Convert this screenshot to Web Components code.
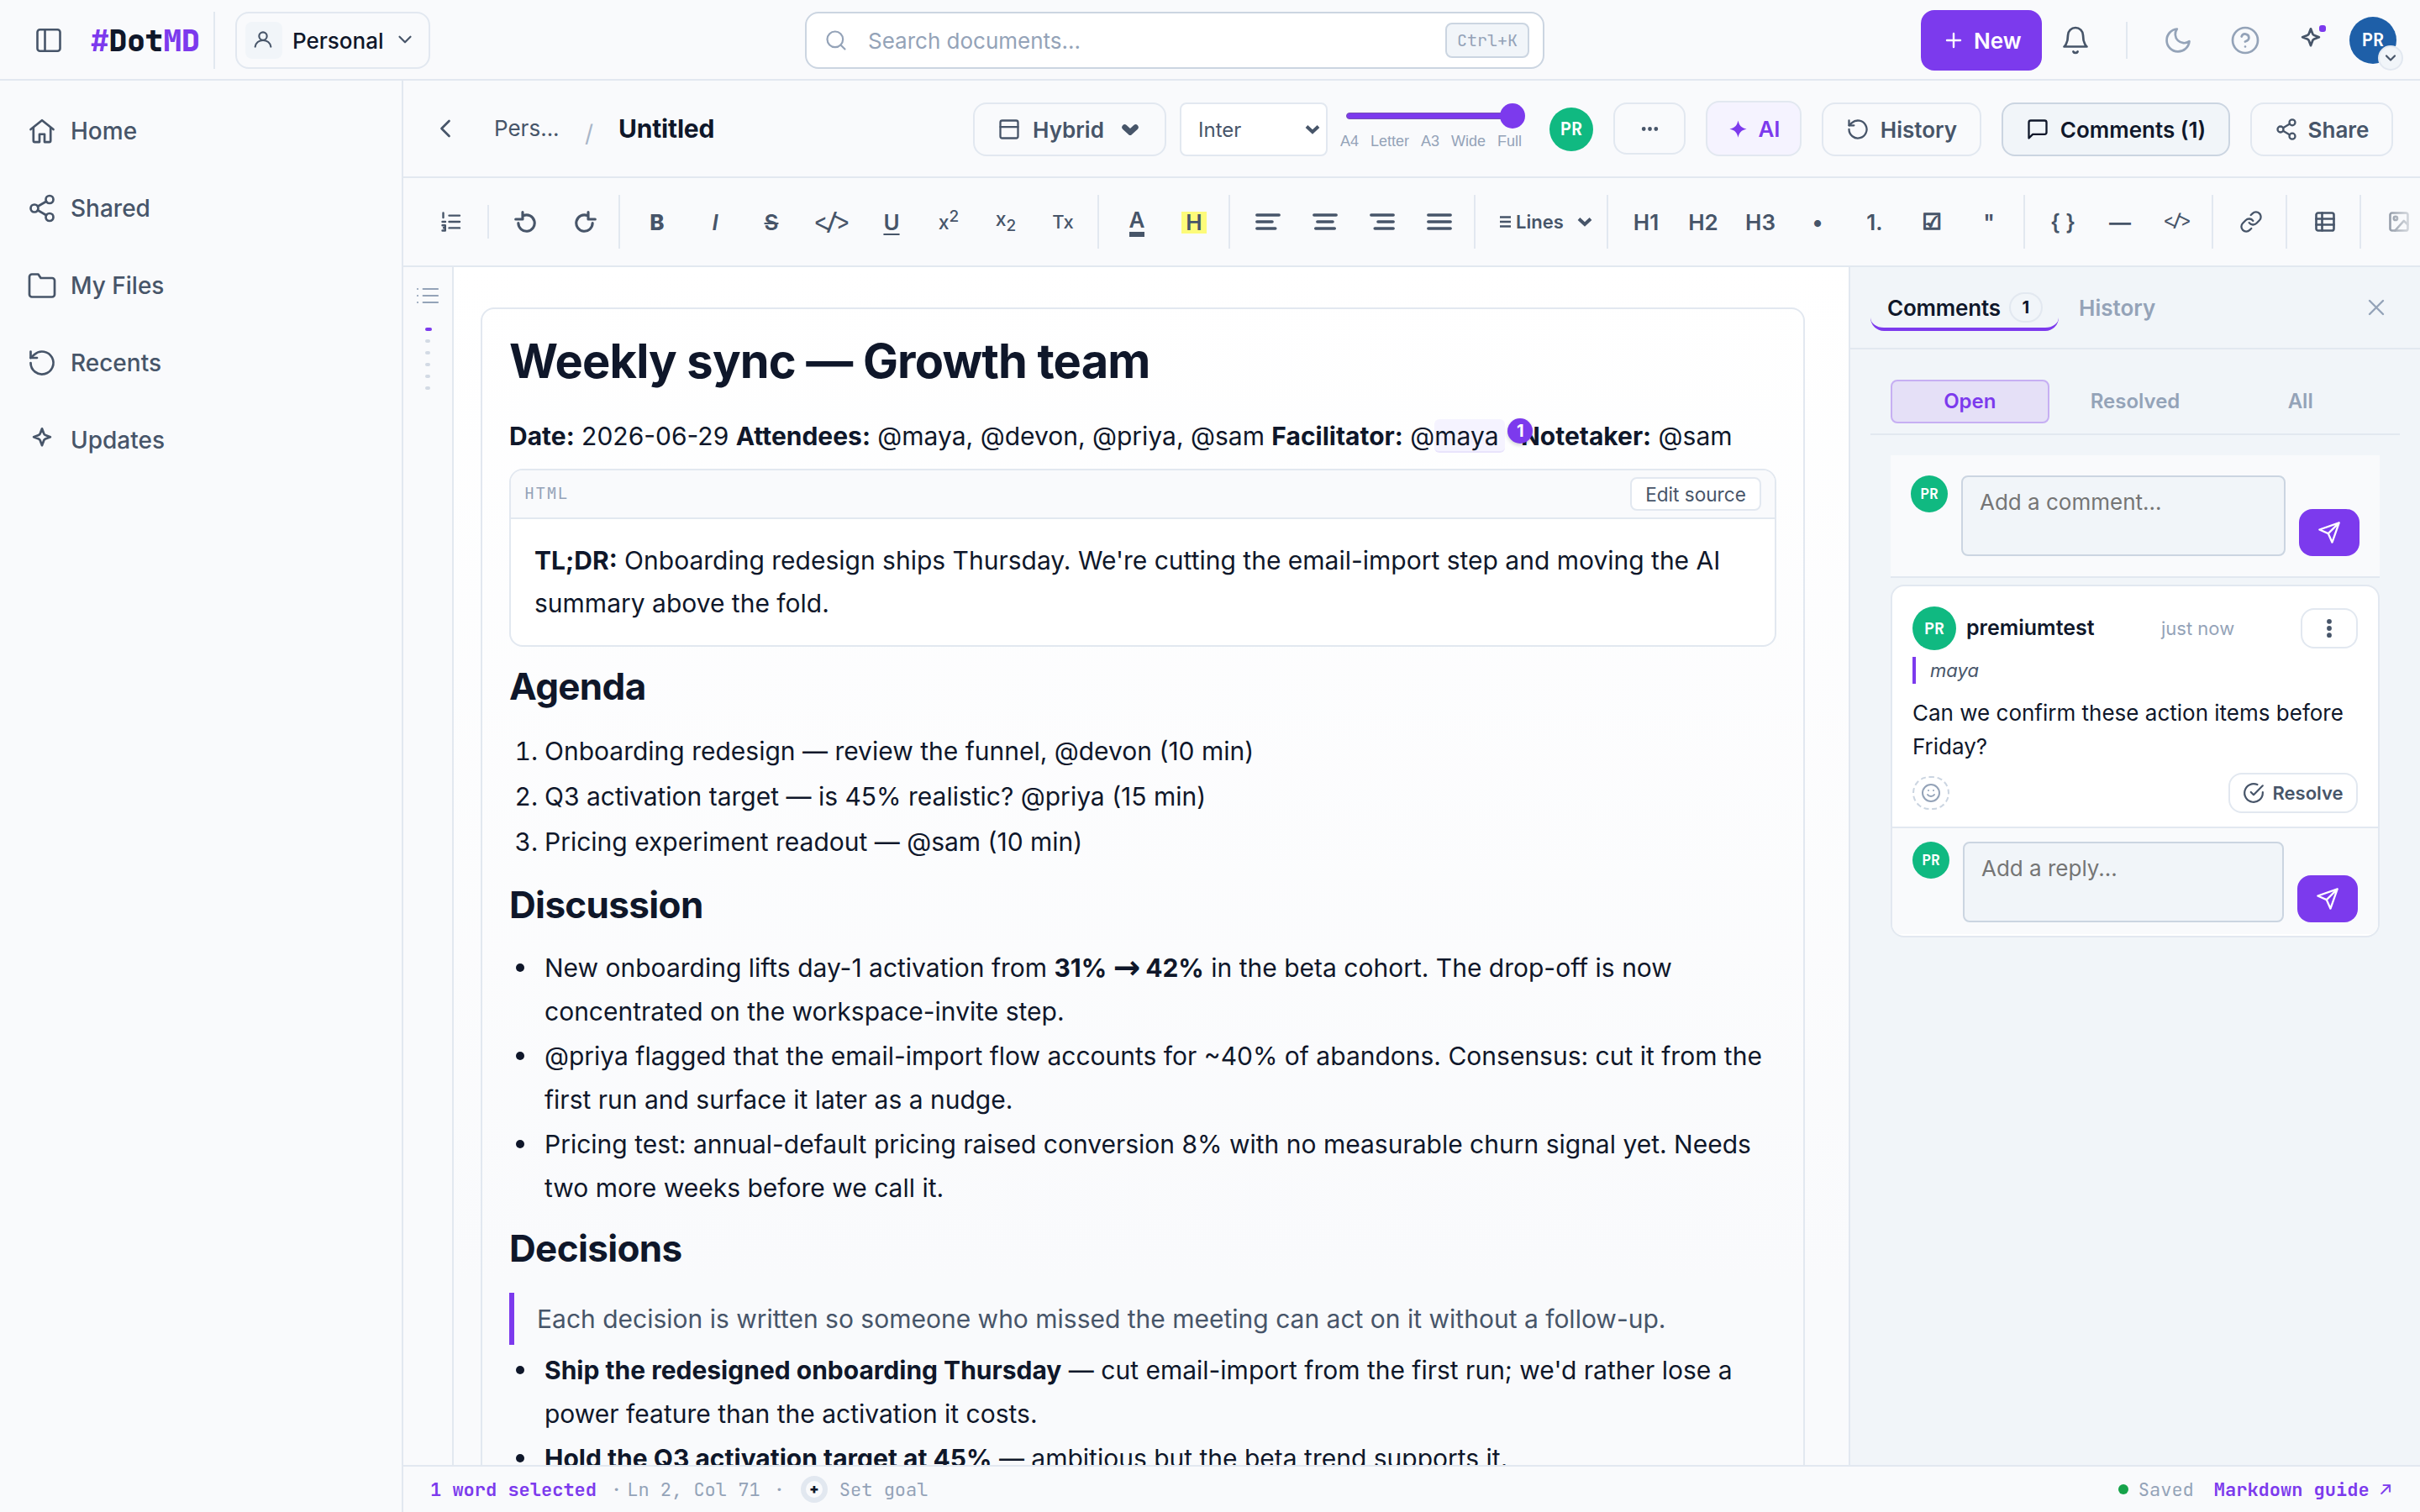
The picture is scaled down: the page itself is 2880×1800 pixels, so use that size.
<!DOCTYPE html>
<html lang="en">
<head>
<meta charset="UTF-8">
<title>Untitled - DotMD</title>
<style>
  :root {
    --bg: #f9fafc;
    --panel: #f1f5f9;
    --line: #e2e8f0;
    --line-strong: #cbd5e1;
    --text: #0f172a;
    --text-soft: #475569;
    --muted: #94a3b8;
    --accent: #7c3aed;
    --accent-soft: #f5f3ff;
    --green: #10b981;
    --mono: "JetBrains Mono", "DejaVu Sans Mono", monospace;
  }
  body {
    margin: 0;
    width: 2880px;
    height: 1800px;
    overflow: hidden;
    background: var(--bg);
    color: var(--text);
    font-family: Inter, "Liberation Sans", sans-serif;
    font-size: 26px;
  }

  /* Prose rules that need sibling or nested selectors, which ::slotted can't do */
  dm-html-block + h2 { margin-top: 19px; }
  ul + h2 { margin-top: 18px; }
  h2 + ol { margin-top: 23.500px; }
  h2 + ul { margin-top: 22.500px; }
  ul { list-style: none; line-height: 51.500px; }
  ul li::before {
    content: "";
    display: inline-block;
    width: 10px;
    height: 10px;
    margin: 0 24px 0 -34px;
    border-radius: 50%;
    background: currentColor;
    vertical-align: 6px;
  }
  li + li { margin-top: 2px; }
  ol li + li { margin-top: 3px; }
  .arrow { font-family: "DejaVu Sans", sans-serif; font-size: 39px; line-height: 0; letter-spacing: -1px; vertical-align: -2px; }
</style>
</head>
<body>
<dm-app>
  <dm-document>
    <h1>Weekly sync — Growth team</h1>
    <p><strong>Date:</strong> 2026-06-29 <strong>Attendees:</strong> @maya, @devon, @priya, @sam <strong>Facilitator:</strong> @<dm-mark count="1">maya</dm-mark> <strong>Notetaker:</strong> @sam</p>
    <dm-html-block><strong>TL;DR:</strong> Onboarding redesign ships Thursday. We're cutting the email-import step and moving the AI summary above the fold.</dm-html-block>
    <h2>Agenda</h2>
    <ol>
      <li>Onboarding redesign — review the funnel, @devon (10 min)</li>
      <li>Q3 activation target — is 45% realistic? @priya (15 min)</li>
      <li>Pricing experiment readout — @sam (10 min)</li>
    </ol>
    <h2>Discussion</h2>
    <ul>
      <li>New onboarding lifts day-1 activation from <strong>31% <span class="arrow">→</span> 42%</strong> in the beta cohort. The drop-off is now concentrated on the workspace-invite step.</li>
      <li>@priya flagged that the email-import flow accounts for ~40% of abandons. Consensus: cut it from the first run and surface it later as a nudge.</li>
      <li>Pricing test: annual-default pricing raised conversion 8% with no measurable churn signal yet. Needs two more weeks before we call it.</li>
    </ul>
    <h2>Decisions</h2>
    <blockquote>Each decision is written so someone who missed the meeting can act on it without a follow-up.</blockquote>
    <ul>
      <li><strong>Ship the redesigned onboarding Thursday</strong> — cut email-import from the first run; we'd rather lose a power feature than the activation it costs.</li>
      <li><strong>Hold the Q3 activation target at 45%</strong> — ambitious but the beta trend supports it.</li>
    </ul>
  </dm-document>
</dm-app>

<script>
  const ICONS = {
    panel: '<rect x="3" y="3.500" width="18" height="17" rx="2"/><path d="M9 3.500v17"/>',
    user: '<circle cx="12" cy="8.600" r="4"/><path d="M4 19.400c.5-4 3.900-6.600 8-6.600s7.500 2.600 8 6.600"/>',
    down: '<path d="M6 9l6 6 6-6"/>',
    left: '<path d="M15 18l-6-6 6-6"/>',
    search: '<circle cx="11" cy="11" r="8"/><path d="M21 21l-4.350-4.350"/>',
    plus: '<path d="M12 4v16M4 12h16"/>',
    bell: '<path d="M18 8A6 6 0 0 0 6 8c0 7-3 9-3 9h18s-3-2-3-9"/><path d="M13.730 21a2 2 0 0 1-3.460 0"/>',
    moon: '<path d="M21 12.790A9 9 0 1 1 11.210 3 7 7 0 0 0 21 12.790z"/>',
    help: '<circle cx="12" cy="12" r="10"/><path d="M9.090 9a3 3 0 0 1 5.830 1c0 2-3 3-3 3M12 17h.01"/>',
    sparkle: '<path d="M12 2.900l1.500 3.900a2 2 0 0 0 1.200 1.200l3.900 1.500-3.900 1.500a2 2 0 0 0-1.200 1.200L12 16.100l-1.500-3.900a2 2 0 0 0-1.200-1.200L5.400 9.500l3.900-1.500a2 2 0 0 0 1.200-1.200z"/>',
    star: '<path fill="currentColor" stroke="none" d="M12 3c1.300 5.400 3.200 7.500 9 9-5.800 1.500-7.700 3.600-9 9-1.300-5.400-3.200-7.500-9-9 5.800-1.500 7.700-3.600 9-9z"/>',
    home: '<path d="M3 10.700l9-7.200 9 7.200"/><path d="M5.200 9.500v10.200a1 1 0 0 0 1 1h3.800v-6.200h4v6.200h3.800a1 1 0 0 0 1-1V9.500"/>',
    share: '<circle cx="18" cy="5" r="3"/><circle cx="6" cy="12" r="3"/><circle cx="18" cy="19" r="3"/><path d="M8.600 13.500l6.800 4M15.400 6.500l-6.800 4"/>',
    folder: '<path d="M22 19a2 2 0 0 1-2 2H4a2 2 0 0 1-2-2V5a2 2 0 0 1 2-2h5l2 3h9a2 2 0 0 1 2 2z"/>',
    recent: '<path d="M3 12a9 9 0 1 0 3-6.700L3 8"/><path d="M3 3v5h5"/>',
    layout: '<rect x="3" y="3" width="18" height="18" rx="2"/><path d="M3 9.500h18"/>',
    dots: '<g fill="currentColor"><circle cx="5" cy="12" r="1.200"/><circle cx="12" cy="12" r="1.200"/><circle cx="19" cy="12" r="1.200"/></g>',
    vdots: '<g fill="currentColor"><circle cx="12" cy="5" r="1.500"/><circle cx="12" cy="12" r="1.500"/><circle cx="12" cy="19" r="1.500"/></g>',
    comment: '<path d="M21 15a2 2 0 0 1-2 2H7l-4 4V5a2 2 0 0 1 2-2h14a2 2 0 0 1 2 2z"/>',
    list: '<path d="M8 6h13M8 12h13M8 18h13M3 6h.01M3 12h.01M3 18h.01"/>',
    ordered: '<path d="M9.500 4.600H22M9.500 12H22M9.500 19.400H22M2.500 1.500v5.500M1.500 12H5M1.500 16.300h3.300v3H3M4.800 19.500v3H1.500"/>',
    undo: '<path d="M5 13.300a8.300 8.300 0 1 0 5.300-7.700"/><path d="M9.400 2.100v7.300H2.300"/>',
    redo: '<path d="M19 13.300a8.300 8.300 0 1 1-5.300-7.700"/><path d="M14.600 2.100v7.300h7.100"/>',
    alignL: '<path d="M1.500 5.600h21M1.500 12h14.500M1.500 18.400h17.500"/>',
    alignC: '<path d="M1.500 5.600h21M4.700 12h14.500M3 18.400h18"/>',
    alignR: '<path d="M1.500 5.600h21M8 12h14.500M5 18.400h17.500"/>',
    alignJ: '<path d="M1.500 5.600h21M1.500 12h21M1.500 18.400h21"/>',
    link: '<path d="M10 13a5 5 0 0 0 7.540.540l3-3a5 5 0 0 0-7.070-7.070l-1.720 1.710"/><path d="M14 11a5 5 0 0 0-7.540-.540l-3 3a5 5 0 0 0 7.070 7.070l1.710-1.710"/>',
    table: '<rect x="3" y="3" width="18" height="18" rx="2"/><path d="M3 9h18M3 15h18M9 3v18"/>',
    image: '<rect x="3" y="3" width="18" height="18" rx="2"/><circle cx="8.500" cy="8.500" r="1.800"/><path d="M21 15l-4-4L8 21"/>',
    close: '<path d="M4 4l16 16M20 4L4 20"/>',
    send: '<path d="M22 2L11 13M22 2l-7 20-4-9-9-4z"/>',
    smile: '<circle cx="12" cy="12" r="10"/><path d="M8 14s1.500 2 4 2 4-2 4-2M9 9h.01M15 9h.01"/>',
    check: '<path d="M22 11.080V12a10 10 0 1 1-5.930-9.140"/><path d="M22 4L12 14.010l-3-3"/>'
  };

  // <dm-icon name size stroke>: stroke is given in screen pixels
  class DmIcon extends HTMLElement {
    constructor() {
      super();
      this.attachShadow({ mode: 'open' });
    }
    connectedCallback() {
      const size = Number(this.getAttribute('size') || 28);
      const stroke = Number(this.getAttribute('stroke') || 2.3) * 24 / size;
      this.shadowRoot.innerHTML = `
        <style>
          :host { display: block; flex: none; width: ${size}px; height: ${size}px; }
          svg { display: block; overflow: visible; }
        </style>
        <svg width="${size}" height="${size}" viewBox="0 0 24 24" fill="none" stroke="currentColor"
          stroke-width="${stroke}" stroke-linecap="round" stroke-linejoin="round">${ICONS[this.getAttribute('name')]}</svg>
      `;
    }
  }
  customElements.define('dm-icon', DmIcon);

  // Small helper: an element whose whole shadow tree is static markup
  function define(tag, html) {
    const template = document.createElement('template');
    template.innerHTML = html;
    customElements.define(tag, class extends HTMLElement {
      constructor() {
        super();
        this.attachShadow({ mode: 'open' }).appendChild(template.content.cloneNode(true));
      }
    });
  }

  define('dm-avatar', `
    <style>
      :host {
        display: flex; align-items: center; justify-content: center; flex: none; box-sizing: border-box;
        width: var(--size, 44px); height: var(--size, 44px); border-radius: 50%;
        background: var(--fill, var(--green)); color: #fff;
        font: 700 var(--fs, 18px)/1 var(--mono);
      }
    </style>
    <slot>PR</slot>
  `);

  define('dm-button', `
    <style>
      :host {
        display: flex; align-items: center; justify-content: center; flex: none; box-sizing: border-box;
        height: 64px; border: 2px solid var(--line); border-radius: 16px;
        color: var(--text-soft); font-weight: 600; font-size: 26px; white-space: nowrap;
      }
    </style>
    <slot></slot>
  `);

  define('dm-topbar', `
    <style>
      :host {
        display: flex; align-items: center; box-sizing: border-box; height: 96px; padding: 2px 20px 0 40px;
        border-bottom: 2px solid var(--line); background: var(--bg); color: var(--text-soft);
      }
      .logo { margin-left: 32px; width: 128px; font: 800 36px/1 var(--mono); color: var(--text); white-space: nowrap; }
      .logo b { color: var(--accent); font-weight: 800; }
      .rule { width: 2px; height: 68px; background: var(--line); margin: 0 24px 0 18px; flex: none; }
      .space {
        display: flex; align-items: center; box-sizing: border-box; width: 232px; height: 68px; padding-left: 10px;
        border: 2px solid var(--line); border-radius: 16px; font-weight: 500; color: var(--text);
      }
      .space .ico { width: 44px; height: 44px; border-radius: 8px; background: var(--panel); display: flex; align-items: center; justify-content: center; margin-right: 12px; color: var(--text-soft); }
      .space .ico dm-icon { margin-top: -2px; margin-left: -2px; }
      .space > dm-icon { margin: -2px 0 0 12px; color: var(--text-soft); }
      .search {
        display: flex; align-items: center; box-sizing: border-box; width: 880px; height: 68px; margin-left: 446px; padding: 0 16px 0 21px;
        background: #fff; border: 2px solid var(--line-strong); border-radius: 16px; color: var(--muted);
      }
      .search span { margin-left: 24px; flex: 1; }
      kbd {
        box-sizing: border-box; width: 100px; height: 42px; line-height: 38px; text-align: center;
        background: var(--panel); border: 2px solid var(--line-strong); border-radius: 8px; font-family: var(--mono); font-size: 20px;
      }
      .new {
        display: flex; align-items: center; width: 144px; height: 72px; box-sizing: border-box; padding-left: 27px; gap: 12px; margin-left: auto;
        border-radius: 16px; background: var(--accent); color: #fff; font-weight: 600;
      }
      .bell { margin: 0 42px 0 22px; }
      .rule.small { height: 44px; margin: 0 42px 0 0; }
      .muted { color: var(--muted); }
      .help { margin: 0 42px 0 44px; }
      .spark { position: relative; margin-right: 28px; }
      .spark i { position: absolute; left: 28px; top: 0; width: 8px; height: 8px; border-radius: 3px; background: var(--accent); }
      .me { position: relative; margin-right: 8px; }
      .me div {
        position: absolute; left: 34px; top: 34px; box-sizing: border-box; width: 30px; height: 30px; border-radius: 50%;
        border: 2px solid var(--line); background: var(--panel); display: flex; align-items: center; justify-content: center;
      }
    </style>
    <dm-icon name="panel" size="36" stroke="2.600"></dm-icon>
    <div class="logo"><b>#</b>Dot<b>MD</b></div>
    <div class="rule"></div>
    <div class="space">
      <div class="ico"><dm-icon name="user" size="28" stroke="2.100"></dm-icon></div>
      Personal
      <dm-icon name="down" size="26" stroke="2.200"></dm-icon>
    </div>
    <div class="search"><dm-icon name="search" size="28" stroke="2.200"></dm-icon><span>Search documents...</span><kbd>Ctrl+K</kbd></div>
    <div class="new"><dm-icon name="plus" size="24" stroke="2.400"></dm-icon>New</div>
    <dm-icon class="bell" name="bell" size="36" stroke="2.700"></dm-icon>
    <div class="rule small"></div>
    <dm-icon class="muted" name="moon" size="36" stroke="2.700"></dm-icon>
    <dm-icon class="muted help" name="help" size="36" stroke="2.700"></dm-icon>
    <div class="spark"><dm-icon name="sparkle" size="36" stroke="2.700"></dm-icon><i></i></div>
    <div class="me"><dm-avatar style="--size:56px;--fs:22px;--fill:#1e5fa8"></dm-avatar><div><dm-icon name="down" size="20" stroke="2.200"></dm-icon></div></div>
  `);

  define('dm-nav-item', `
    <style>
      :host { display: flex; align-items: center; gap: 16px; height: 92px; font-size: 28px; font-weight: 500; color: var(--text-soft); }
    </style>
    <slot name="icon"></slot><slot></slot>
  `);

  define('dm-sidebar', `
    <style>
      :host { display: block; box-sizing: border-box; width: 480px; padding: 14px 32px; border-right: 2px solid var(--line); background: var(--bg); }
    </style>
    <dm-nav-item><dm-icon slot="icon" name="home" size="36" stroke="2.700"></dm-icon>Home</dm-nav-item>
    <dm-nav-item><dm-icon slot="icon" name="share" size="36" stroke="2.700"></dm-icon>Shared</dm-nav-item>
    <dm-nav-item><dm-icon slot="icon" name="folder" size="36" stroke="2.700"></dm-icon>My Files</dm-nav-item>
    <dm-nav-item><dm-icon slot="icon" name="recent" size="36" stroke="2.700"></dm-icon>Recents</dm-nav-item>
    <dm-nav-item><dm-icon slot="icon" name="sparkle" size="36" stroke="2.700"></dm-icon>Updates</dm-nav-item>
  `);

  define('dm-width-slider', `
    <style>
      :host { display: block; width: 220px; height: 64px; flex: none; }
      .track { position: relative; height: 30px; margin: 1px 0 0 7px; display: flex; align-items: center; }
      .track::before { content: ""; width: 205px; height: 8px; box-sizing: border-box; border: 1px solid #7650b4; border-radius: 4px; background: var(--accent); }
      .track::after { content: ""; position: absolute; left: 183px; top: 0; width: 30px; height: 30px; border-radius: 50%; background: var(--accent); }
      .labels { display: flex; justify-content: space-between; width: 216px; margin-top: 4px; font: 18px/22px "Liberation Sans", Arial, sans-serif; color: var(--muted); }
    </style>
    <div class="track"></div>
    <div class="labels"><span>A4</span><span>Letter</span><span>A3</span><span>Wide</span><span>Full</span></div>
  `);

  define('dm-docbar', `
    <style>
      :host {
        display: flex; align-items: flex-start; box-sizing: border-box; height: 116px; padding: 26px 32px 0 32px;
        border-bottom: 2px solid var(--line); background: var(--bg); color: var(--text-soft);
      }
      .crumbs { display: flex; align-items: center; height: 62px; width: 647px; }
      .crumbs .ws { margin-left: 40px; width: 76px; margin-top: -2px; }
      .crumbs .sep { margin: 12px 30px 0 32px; color: #a9b6c8; font-size: 28px; }
      .crumbs .title { font-size: 30px; font-weight: 700; letter-spacing: -0.2px; color: var(--text); }
      .hybrid { width: 230px; margin-right: 16px; padding-right: 4px; }
      .hybrid span { margin: 0 21px 0 14px; }
      .font {
        display: flex; align-items: center; justify-content: space-between; box-sizing: border-box; width: 176px; height: 64px; padding: 0 7px 0 20px;
        border: 2px solid var(--line); border-radius: 8px; background: #fff; font-size: 24px; margin-right: 15px; flex: none;
      }
      dm-avatar { margin: 6px 24px 0 29px; }
      .more { width: 86px; height: 62px; }
      .ai { width: 114px; height: 66px; margin: -2px 24px 0; background: var(--accent-soft); color: var(--accent); gap: 10px; }
      .history { width: 190px; gap: 13px; }
      .comments { width: 272px; margin: 0 24px; gap: 13px; background: var(--panel); border-color: var(--line-strong); color: var(--text); }
      .share { width: 170px; gap: 12px; }
      svg { display: block; flex: none; }
    </style>
    <div class="crumbs">
      <dm-icon name="left" size="36" stroke="2.700"></dm-icon>
      <span class="ws">Pers...</span><span class="sep">/</span><span class="title">Untitled</span>
    </div>
    <dm-button class="hybrid">
      <dm-icon name="layout"></dm-icon><span>Hybrid</span>
      <svg width="20" height="13" viewBox="0 0 20 13"><path d="M3.500 3.500L10 9.500l6.500-6" fill="none" stroke="#475569" stroke-width="6.500" stroke-linecap="round"/></svg>
    </dm-button>
    <div class="font">Inter<svg width="18" height="12" viewBox="0 0 18 12"><path d="M2 2.500l7 6.500 7-6.500" fill="none" stroke="#475569" stroke-width="4"/></svg></div>
    <dm-width-slider></dm-width-slider>
    <dm-avatar style="--size:52px;--fs:22px"></dm-avatar>
    <dm-button class="more"><dm-icon name="dots" size="25"></dm-icon></dm-button>
    <dm-button class="ai"><dm-icon name="star" size="27"></dm-icon>AI</dm-button>
    <dm-button class="history"><dm-icon name="recent"></dm-icon>History</dm-button>
    <dm-button class="comments"><dm-icon name="comment"></dm-icon>Comments (1)</dm-button>
    <dm-button class="share"><dm-icon name="share"></dm-icon>Share</dm-button>
  `);

  define('dm-tool', `
    <style>
      :host { display: flex; align-items: center; justify-content: center; width: 64px; height: 64px; flex: none; font-weight: 600; font-size: 26px; }
    </style>
    <slot></slot>
  `);

  define('dm-tool-group', `
    <style>
      :host { display: flex; align-items: center; box-sizing: border-box; gap: 4px; height: 64px; flex: none; padding: 0 9px 0 13px; border-right: 2px solid var(--line); }
    </style>
    <slot></slot>
  `);

  define('dm-toolbar', `
    <style>
      :host {
        display: flex; align-items: center; box-sizing: border-box; height: 106px; padding-left: 25px; overflow: hidden; position: relative;
        border-bottom: 2px solid var(--line); background: var(--bg); color: var(--text-soft);
      }
      :host::after { content: ""; position: absolute; right: 0; top: 0; width: 64px; height: 104px; background: linear-gradient(90deg, transparent, var(--bg)); }
      .rule { width: 2px; height: 40px; background: var(--line); margin-left: 11px; flex: none; }
      .undo { padding: 0 5px 0 9px; }
      .undo dm-tool { width: 68px; }
      .code { width: 70px; font: 500 26px var(--mono); }
      .code.sm { width: 64px; font-size: 20px; box-sizing: border-box; padding-bottom: 3px; }
      s, u { text-decoration-thickness: 2px; }
      u { text-underline-offset: 4px; }
      sup, sub { font-size: 19px; line-height: 0; }
      .x { font-size: 23px; font-weight: 500; display: block; margin-top: 2px; }
      .x.low { margin-top: -7px; }
      .ink { display: flex; flex-direction: column; align-items: center; margin-top: 4px; line-height: 24px; }
      .ink::after { content: ""; width: 18px; height: 6px; background: var(--text-soft); margin-top: 2px; }
      .mark { background: #fdfb7a; width: 30px; height: 26px; line-height: 26px; text-align: center; margin-top: 2px; }
      .lines { display: flex; align-items: center; width: 134px; font-size: 22px; font-weight: 600; box-sizing: border-box; padding-left: 16px; }
      .lines .bars { margin-right: 6px; }
      .lines .arrow { margin-left: 16px; }
      .box { font-family: "DejaVu Sans", sans-serif; -webkit-text-stroke: 1.500px currentColor; }
    </style>
    <dm-tool><dm-icon name="ordered" size="24" stroke="2.400"></dm-icon></dm-tool>
    <div class="rule"></div>
    <dm-tool-group class="undo">
      <dm-tool><dm-icon name="undo" stroke="3.100"></dm-icon></dm-tool>
      <dm-tool><dm-icon name="redo" stroke="3.100"></dm-icon></dm-tool>
    </dm-tool-group>
    <dm-tool-group>
      <dm-tool><b style="margin-right:2px;font-weight:800">B</b></dm-tool>
      <dm-tool><i>I</i></dm-tool>
      <dm-tool><s style="margin-right:2px">S</s></dm-tool>
      <dm-tool class="code">&lt;/&gt;</dm-tool>
      <dm-tool><u>U</u></dm-tool>
      <dm-tool><span class="x">x<sup>2</sup></span></dm-tool>
      <dm-tool><span class="x low">x<sub>2</sub></span></dm-tool>
      <dm-tool><span style="font-size:22px;font-weight:500">Tx</span></dm-tool>
    </dm-tool-group>
    <dm-tool-group>
      <dm-tool><span class="ink">A</span></dm-tool>
      <dm-tool><span class="mark">H</span></dm-tool>
    </dm-tool-group>
    <dm-tool-group>
      <dm-tool><dm-icon name="alignL" size="30" stroke="3.600"></dm-icon></dm-tool>
      <dm-tool><dm-icon name="alignC" size="30" stroke="3.600"></dm-icon></dm-tool>
      <dm-tool><dm-icon name="alignR" size="30" stroke="3.600"></dm-icon></dm-tool>
      <dm-tool><dm-icon name="alignJ" size="30" stroke="3.600"></dm-icon></dm-tool>
    </dm-tool-group>
    <dm-tool-group>
      <div class="lines">
        <svg class="bars" width="13" height="14" viewBox="0 0 13 14"><path d="M0 1.500h13M0 7h13M0 12.500h13" stroke="#475569" stroke-width="2.600"/></svg>Lines
        <svg class="arrow" width="18" height="12" viewBox="0 0 18 12"><path d="M2 2.500l7 6.500 7-6.500" fill="none" stroke="#475569" stroke-width="4"/></svg>
      </div>
    </dm-tool-group>
    <dm-tool-group>
      <dm-tool>H1</dm-tool>
      <dm-tool>H2</dm-tool>
      <dm-tool>H3</dm-tool>
      <dm-tool>•</dm-tool>
      <dm-tool>1.</dm-tool>
      <dm-tool><span class="box">☑</span></dm-tool>
      <dm-tool>"</dm-tool>
    </dm-tool-group>
    <dm-tool-group>
      <dm-tool>{ }</dm-tool>
      <dm-tool>—</dm-tool>
      <dm-tool class="code sm">&lt;/&gt;</dm-tool>
    </dm-tool-group>
    <dm-tool-group><dm-tool><dm-icon name="link"></dm-icon></dm-tool></dm-tool-group>
    <dm-tool-group><dm-tool><dm-icon name="table" stroke="2.600"></dm-icon></dm-tool></dm-tool-group>
    <dm-tool-group><dm-tool><dm-icon name="image" stroke="2.600"></dm-icon></dm-tool></dm-tool-group>
  `);

  define('dm-outline', `
    <style>
      :host { display: flex; flex-direction: column; box-sizing: border-box; width: 60px; padding: 18px 13px; border-right: 2px solid var(--line); background: var(--bg); color: var(--muted); }
      i { width: 6px; height: 4px; border-radius: 2px; background: #d3dae4; margin: 0 0 10px 13px; }
      i.on { width: 8px; background: var(--accent); margin-top: 22px; }
    </style>
    <dm-icon name="list" size="32" stroke="2.200"></dm-icon>
    <i class="on"></i><i></i><i></i><i></i><i></i><i></i>
  `);

  define('dm-document', `
    <style>
      :host { display: block; flex: 1; min-width: 0; box-sizing: border-box; padding: 48px 52px 0 32px; overflow: hidden; background: linear-gradient(#fff, var(--bg) 85%); }
      .page { box-sizing: border-box; height: 1600px; padding: 26px 32px; border: 2px solid var(--line); border-radius: 16px; font-size: 30px; line-height: 51px; }
      ::slotted(*) { margin: 0; }
      ::slotted(h1) { font-size: 56px; line-height: 72px; font-weight: 700; letter-spacing: -0.015em; margin: 0 0 28px; }
      ::slotted(dm-html-block) { margin: 13px 0 19px; }
      ::slotted(h2) { font-size: 44px; line-height: 56px; font-weight: 700; letter-spacing: -0.015em; margin: 21px 0; }
      ::slotted(ol), ::slotted(ul) { padding-left: 42px; }
      ::slotted(blockquote) { border-left: 6px solid var(--accent); color: var(--text-soft); padding: 6px 0 5px 27px; margin: 25px 0 5px; }
    </style>
    <div class="page"><slot></slot></div>
  `);

  define('dm-mark', `
    <style>
      :host { position: relative; display: inline-block; height: 40px; line-height: 40px; box-sizing: border-box; padding-right: 8px; margin-right: 10px; background: var(--accent-soft); border-bottom: 2px solid #e9e4fc; border-radius: 6px; vertical-align: baseline; }
      span {
        position: absolute; left: 87px; top: -1px; width: 30px; height: 30px; border-radius: 50%; background: var(--accent); color: #fff;
        font: 700 20px/30px Inter, sans-serif; text-align: center; box-shadow: 0 2px 4px rgba(15, 23, 42, .2); z-index: 1;
      }
    </style>
    <slot></slot><span>1</span>
  `);

  define('dm-html-block', `
    <style>
      :host { display: block; border: 2px solid var(--line); border-radius: 16px; background: #fff; overflow: hidden; }
      header { display: flex; align-items: center; justify-content: space-between; box-sizing: border-box; height: 58px; padding: 0 16px; border-bottom: 2px solid var(--line); background: var(--bg); font: 20px var(--mono); letter-spacing: 1.200px; color: var(--muted); }
      header span { margin-top: -3px; }
      button { box-sizing: border-box; width: 156px; height: 40px; padding: 0; border: 2px solid var(--line); border-radius: 8px; background: #fff; color: var(--text-soft); font: 22.600px Inter, sans-serif; letter-spacing: 0; }
      div { padding: 24px 28px; }
    </style>
    <header><span>HTML</span><button>Edit source</button></header>
    <div><slot></slot></div>
  `);

  define('dm-composer', `
    <style>
      :host { display: flex; align-items: flex-start; gap: 16px; }
      .field { flex: 1; box-sizing: border-box; height: 96px; padding: 14px 20px; border: 2px solid var(--line-strong); border-radius: 8px; background: var(--panel); color: #757575; font-size: 26px; line-height: 32px; }
      .send { display: flex; align-items: center; justify-content: center; width: 72px; height: 56px; margin-top: 40px; border-radius: 16px; background: var(--accent); color: #fff; }
    </style>
    <dm-avatar></dm-avatar>
    <div class="field"><slot></slot></div>
    <div class="send"><dm-icon name="send" stroke="2.300"></dm-icon></div>
  `);

  define('dm-comment', `
    <style>
      :host { display: block; box-sizing: border-box; height: 420px; border: 2px solid var(--line); border-radius: 16px; background: #fff; overflow: hidden; }
      .body { box-sizing: border-box; height: 286px; padding: 24px 24px 0; }
      .row { display: flex; align-items: center; }
      .name { font-size: 25px; font-weight: 600; margin: -2px 0 0 12px; width: 232px; }
      .when { font-size: 22px; color: var(--muted); flex: 1; }
      dm-button.menu { width: 68px; height: 48px; }
      .quote { height: 32px; line-height: 32px; margin: 8px 0 12px; padding-left: 17px; border-left: 4px solid var(--accent); font-size: 22px; font-style: italic; color: var(--text-soft); }
      p { margin: 0 0 12px; height: 82px; line-height: 40px; padding-top: 3px; box-sizing: border-box; }
      .react { box-sizing: border-box; width: 44px; height: 40px; border: 2px dashed var(--line-strong); border-radius: 20px; display: flex; align-items: center; justify-content: center; color: var(--muted); }
      .resolve { width: 154px; height: 48px; margin-left: auto; font-size: 22px; gap: 9px; }
      .reply { border-top: 2px solid var(--line); height: 128px; box-sizing: border-box; padding: 16px 24px; background: var(--bg); }
    </style>
    <div class="body">
      <div class="row">
        <dm-avatar style="--size:52px;--fs:20px"></dm-avatar>
        <span class="name">premiumtest</span><span class="when">just now</span>
        <dm-button class="menu"><dm-icon name="vdots" size="28"></dm-icon></dm-button>
      </div>
      <div class="quote">maya</div>
      <p>Can we confirm these action items before Friday?</p>
      <div class="row">
        <div class="react"><dm-icon name="smile" size="24" stroke="2"></dm-icon></div>
        <dm-button class="resolve"><dm-icon name="check" size="26" stroke="2.200"></dm-icon>Resolve</dm-button>
      </div>
    </div>
    <div class="reply"><dm-composer>Add a reply...</dm-composer></div>
  `);

  define('dm-comments', `
    <style>
      :host { display: block; box-sizing: border-box; width: 680px; border-left: 2px solid var(--line); background: var(--panel); }
      .tabs { display: flex; align-items: center; box-sizing: border-box; height: 98px; padding: 0 40px 0 24px; border-bottom: 2px solid var(--line); font-weight: 600; color: var(--muted); }
      .tab { display: flex; align-items: center; box-sizing: border-box; width: 224px; height: 56px; padding: 4px 0 0 20px; border-bottom: 4px solid var(--accent); border-radius: 16px; color: var(--text); letter-spacing: -0.2px; }
      .tab b { box-sizing: border-box; width: 40px; height: 36px; margin-left: 10px; border: 2px solid var(--line); border-radius: 18px; background: var(--panel); font: 700 20px/32px Inter, sans-serif; text-align: center; }
      .tabs span { margin-left: 24px; flex: 1; }
      .filters { display: grid; grid-template-columns: repeat(3, 1fr); gap: 8px; margin: 0 24px; padding: 36px 24px 12px; border-bottom: 2px solid var(--line); font-size: 24px; font-weight: 600; line-height: 48px; text-align: center; color: var(--muted); }
      .filters div { border: 2px solid transparent; border-radius: 8px; }
      .filters .on { background: #e5e0f7; border-color: #c6aff3; color: var(--accent); }
      .list { padding: 24px 48px 0; }
      .write { box-sizing: border-box; height: 146px; padding: 24px; border-bottom: 2px solid var(--line); background: var(--bg); margin-bottom: 8px; }
    </style>
    <div class="tabs"><div class="tab">Comments<b>1</b></div><span>History</span><dm-icon name="close" size="24" stroke="2.400"></dm-icon></div>
    <div class="filters"><div class="on">Open</div><div>Resolved</div><div>All</div></div>
    <div class="list">
      <div class="write"><dm-composer>Add a comment...</dm-composer></div>
      <dm-comment></dm-comment>
    </div>
  `);

  define('dm-statusbar', `
    <style>
      :host { display: flex; align-items: center; box-sizing: border-box; height: 56px; padding: 0 34px 0 32px; border-top: 2px solid var(--line); background: var(--bg); font: 22px var(--mono); color: var(--muted); white-space: pre; }
      b { color: var(--accent); font-weight: 600; }
      .goal { box-sizing: border-box; width: 32px; height: 32px; border: 6px solid var(--line); border-radius: 50%; color: var(--text); font: 800 18px/19px var(--mono); text-align: center; margin: 0 14px 0 19px; }
      .dot { width: 12px; height: 12px; border-radius: 50%; background: #16a34a; margin: 0 12px 0 auto; }
    </style>
    <b>1 word selected</b><span style="margin-left:17px">·</span><span style="margin-left:6px">Ln 2, Col 71</span><span style="margin-left:16px">·</span>
    <div class="goal">+</div><span>Set goal</span>
    <div class="dot"></div><span>Saved</span><b style="margin-left:24px">Markdown guide ↗</b>
  `);

  define('dm-app', `
    <style>
      :host { display: flex; flex-direction: column; width: 2880px; height: 1800px; }
      .main { flex: 1; display: flex; min-height: 0; }
      .work { flex: 1; display: flex; flex-direction: column; min-width: 0; }
      .stage { flex: 1; display: flex; min-height: 0; overflow: hidden; }
      dm-sidebar, dm-docbar, dm-toolbar, dm-statusbar { flex: none; }
    </style>
    <dm-topbar></dm-topbar>
    <div class="main">
      <dm-sidebar></dm-sidebar>
      <div class="work">
        <dm-docbar></dm-docbar>
        <dm-toolbar></dm-toolbar>
        <div class="stage"><dm-outline></dm-outline><slot></slot><dm-comments></dm-comments></div>
        <dm-statusbar></dm-statusbar>
      </div>
    </div>
  `);
</script>
</body>
</html>
